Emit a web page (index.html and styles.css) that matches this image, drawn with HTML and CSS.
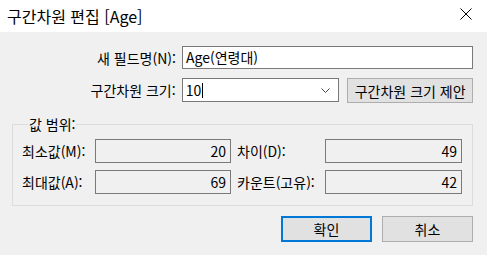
FILE: index.html
```html
<!DOCTYPE html>
<html lang="ko">
<head>
    <meta charset="UTF-8">
    <title>구간차원 편집 [Age]</title>
    <link rel="stylesheet" href="styles.css">
</head>
<body>
    <div class="window">
        <div class="titlebar">
            <span class="title">구간차원 편집 [Age]</span>
            <svg class="close" width="12" height="12" viewBox="0 0 12 12">
                <path d="M0.5 0.5 L11.5 11.5 M11.5 0.5 L0.5 11.5" stroke="#000" stroke-width="1" fill="none"/>
            </svg>
        </div>
        <div class="content">
            <div class="row">
                <label class="label">새 필드명(N):</label>
                <div class="textbox wide">Age(연령대)</div>
            </div>
            <div class="row">
                <label class="label">구간차원 크기:</label>
                <div class="textbox combo">
                    <span>10</span><span class="caret"></span>
                    <svg class="chevron" width="9" height="5" viewBox="0 0 9 5">
                        <path d="M0.5 0.5 L4.5 4.5 L8.5 0.5" stroke="#444" stroke-width="1" fill="none"/>
                    </svg>
                </div>
                <button class="btn suggest">구간차원 크기 제안</button>
            </div>
            <fieldset class="group">
                <legend>값 범위:</legend>
                <div class="grid">
                    <span>최소값(M):</span>
                    <div class="readonly">20</div>
                    <span class="second">차이(D):</span>
                    <div class="readonly">49</div>
                    <span>최대값(A):</span>
                    <div class="readonly">69</div>
                    <span class="second">카운트(고유):</span>
                    <div class="readonly">42</div>
                </div>
            </fieldset>
            <div class="actions">
                <button class="btn default">확인</button>
                <button class="btn">취소</button>
            </div>
        </div>
    </div>
</body>
</html>
```

FILE: styles.css
```css
body {
    margin: 0;
    font-family: "Noto Sans CJK KR", "Noto Sans", sans-serif;
    font-size: 14px;
    color: #000;
    background-color: #f0f0f0;
}

.window {
    width: 487px;
    height: 255px;
    background-color: #f0f0f0;
}

.titlebar {
    height: 32px;
    background-color: #fff;
    display: flex;
    align-items: center;
    justify-content: space-between;
    padding: 0 15px 0 7px;
    box-sizing: border-box;
}

.title {
    font-size: 16px;
    line-height: 18px;
    margin-top: -1px;
}

.close {
    display: block;
    margin-top: -5px;
}

.content {
    padding: 14px 14px 0 8px;
}

.row {
    display: flex;
    align-items: center;
    margin-bottom: 8px;
}

.label {
    width: 168px;
    text-align: right;
    margin-right: 6px;
    line-height: 16px;
}

.textbox {
    height: 23px;
    border: 1px solid #7a7a7a;
    background-color: #fff;
    box-sizing: border-box;
    padding: 0 3px;
    line-height: 21px;
    display: flex;
    align-items: center;
}

.wide {
    flex: 1;
}

.combo {
    width: 158px;
    height: 24px;
    position: relative;
}

.caret {
    width: 1px;
    height: 15px;
    background-color: #000;
    margin-left: 1px;
}

.chevron {
    position: absolute;
    right: 8px;
    top: 9px;
}

.btn {
    font-family: inherit;
    font-size: 14px;
    line-height: 16px;
    background-color: #e1e1e1;
    border: 1px solid #adadad;
    padding: 0;
    color: #000;
}

.suggest {
    margin-left: 8px;
    width: 126px;
    height: 25px;
    margin-top: 1px;
}

.group {
    margin: 14px 0 0 4px;
    border: 1px solid #dcdcdc;
    padding: 8px 10px 9px 9px;
    height: 89px;
    box-sizing: border-box;
}

.group legend {
    padding: 0 1px;
    margin-left: 6px;
    line-height: 14px;
}

.grid {
    display: grid;
    grid-template-columns: 73px 136px 94px 137px;
    row-gap: 7px;
    align-items: center;
}

.second {
    padding-left: 6px;
}

.readonly {
    height: 24px;
    border: 1px solid #7a7a7a;
    box-sizing: border-box;
    text-align: right;
    padding-right: 4px;
    line-height: 22px;
}

.actions {
    display: flex;
    justify-content: flex-end;
    gap: 10px;
    margin-top: 10px;
}

.actions .btn {
    width: 91px;
    height: 26px;
}

.default {
    border: 2px solid #0078d7;
}
```
